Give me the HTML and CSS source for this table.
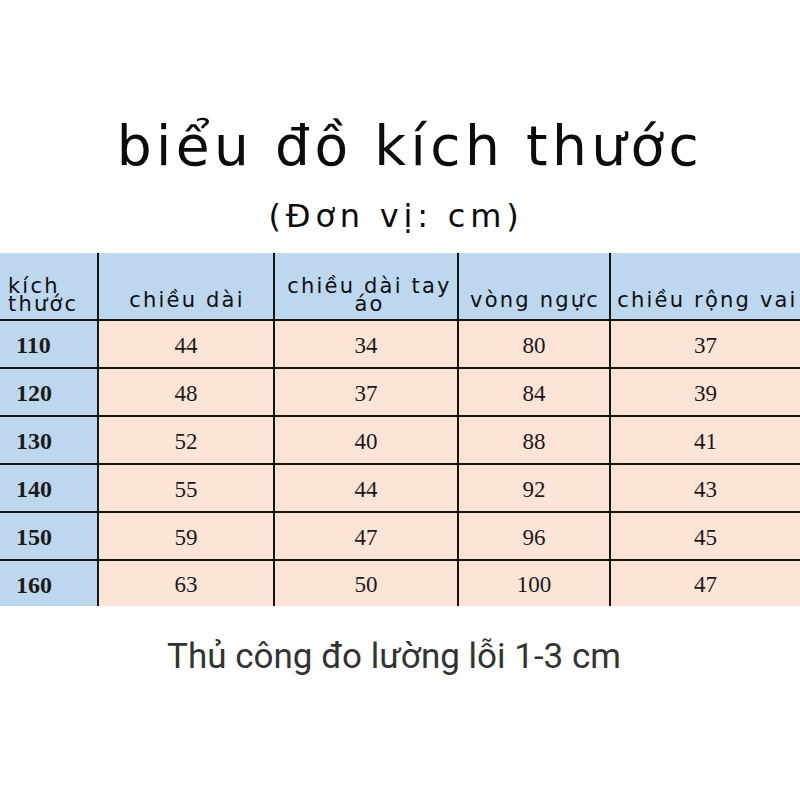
FILE: index.html
```html
<!DOCTYPE html>
<html lang="vi">
<head>
<meta charset="utf-8">
<title>biểu đồ kích thước</title>
<link rel="stylesheet" href="styles.css">
</head>
<body>
<main class="page">
  <h1 class="title">biểu đồ kích thước</h1>
  <p class="unit">(Đơn vị: cm)</p>
  <table class="size-table">
    <colgroup>
      <col class="c-size">
      <col class="c-len">
      <col class="c-sleeve">
      <col class="c-chest">
      <col class="c-shoulder">
    </colgroup>
    <thead>
      <tr class="head-row">
        <th class="h-size">kích thước</th>
        <th class="one-line">chiều dài</th>
        <th class="two-line">chiều dài tay áo</th>
        <th class="one-line">vòng ngực</th>
        <th class="one-line nowrap">chiều rộng vai</th>
      </tr>
    </thead>
    <tbody>
      <tr><th class="size">110</th><td>44</td><td>34</td><td>80</td><td>37</td></tr>
      <tr><th class="size">120</th><td>48</td><td>37</td><td>84</td><td>39</td></tr>
      <tr><th class="size">130</th><td>52</td><td>40</td><td>88</td><td>41</td></tr>
      <tr><th class="size">140</th><td>55</td><td>44</td><td>92</td><td>43</td></tr>
      <tr><th class="size">150</th><td>59</td><td>47</td><td>96</td><td>45</td></tr>
      <tr class="last-row"><th class="size">160</th><td>63</td><td>50</td><td>100</td><td>47</td></tr>
    </tbody>
  </table>
  <p class="note">Thủ công đo lường lỗi 1-3 cm</p>
</main>
</body>
</html>
```

FILE: styles.css
```css
html, body {
  margin: 0;
  padding: 0;
  background: #ffffff;
}

.page {
  width: 800px;
  height: 800px;
  display: flex;
  flex-direction: column;
  align-items: center;
  padding-top: 114px;
  box-sizing: border-box;
  color: #111111;
}

.title {
  margin: 0;
  padding-left: 20px;
  font-family: "DejaVu Sans", sans-serif;
  font-weight: normal;
  font-size: 55px;
  line-height: 64px;
  letter-spacing: 4.4px;
  color: #0c0c0c;
}

.unit {
  margin: 19px 0 0 0;
  padding-right: 8px;
  font-family: "DejaVu Sans", sans-serif;
  font-size: 32px;
  line-height: 38px;
  letter-spacing: 4.8px;
  color: #0c0c0c;
}

.size-table {
  margin-top: 18px;
  width: 800px;
  table-layout: fixed;
  border-collapse: collapse;
  border-spacing: 0;
}

.c-size { width: 98px; }
.c-len { width: 176px; }
.c-sleeve { width: 184px; }
.c-chest { width: 152px; }
.c-shoulder { width: 190px; }

.size-table th,
.size-table td {
  padding: 0 2px;
  border-right: 2px solid #151515;
  border-bottom: 2px solid #151515;
  background: #fce4d6;
  text-align: center;
}

.size-table tr > :last-child {
  border-right: none;
}

.size-table .last-row > * {
  border-bottom: none;
}

.head-row {
  height: 67px;
}

.head-row th {
  background: #bdd7ee;
  vertical-align: bottom;
  font-family: "DejaVu Sans", sans-serif;
  font-weight: normal;
  font-size: 21px;
  line-height: 18px;
  letter-spacing: 2.2px;
  color: #0f0f0f;
}

.head-row .one-line { padding-bottom: 10px; padding-left: 4px; }
.head-row .two-line { padding-bottom: 6px; padding-left: 9px; }
.head-row .nowrap { white-space: nowrap; padding-left: 4px; padding-right: 0; }

.head-row .h-size {
  text-align: left;
  padding-left: 8px;
  padding-right: 0;
  padding-bottom: 6px;
}

.size-table tbody tr {
  height: 48px;
}

.size-table tbody .last-row {
  height: 46px;
}

.size-table td,
.size-table th.size {
  font-family: "Liberation Serif", serif;
  font-size: 23px;
  color: #1a1a1a;
  padding-top: 3px;
}

.size-table th.size {
  background: #bdd7ee;
  text-align: left;
  padding-left: 16px;
  font-weight: bold;
  font-size: 24px;
}

.note {
  margin: 31px 0 0 0;
  padding-right: 12px;
  font-family: Roboto, "Liberation Sans", sans-serif;
  font-size: 35px;
  line-height: 40px;
  color: #333333;
}
```
